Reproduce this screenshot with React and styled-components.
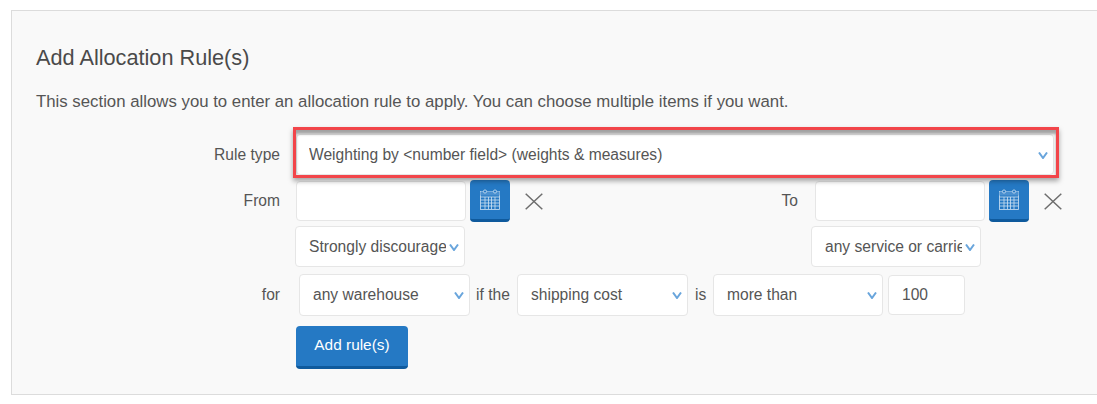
import React from "react";
import styled, { createGlobalStyle } from "styled-components";

const Global = createGlobalStyle`
  html, body { margin: 0; padding: 0; background: #fff; }
  body { font-family: "Liberation Sans", Arial, sans-serif; color: #555; overflow: hidden; }
`;

const Panel = styled.section`
  box-sizing: border-box;
  margin: 10px 0 0 11px;
  width: 1086px;
  height: 385px;
  background: #f9f9f9;
  border: 1px solid #dcdcdc;
  border-right: 0;
`;
const Header = styled.header`
  padding: 35px 0 0 24px;
`;
const Title = styled.h2`
  margin: 0 0 22px;
  font-size: 21.7px;
  line-height: 24px;
  font-weight: 400;
  color: #4a4a4a;
`;
const Intro = styled.p`
  margin: 0 0 22px;
  font-size: 16.8px;
  line-height: 20px;
  color: #555;
`;
const Form = styled.div`
  display: flex;
  flex-direction: column;
`;
const Row = styled.div`
  display: flex;
  align-items: center;
  margin-top: ${(p) => p.$top || 0}px;
`;
const Label = styled.label`
  box-sizing: border-box;
  flex: none;
  width: ${(p) => p.$width || 268}px;
  margin-right: ${(p) => p.$gap ?? 16}px;
  text-align: right;
  font-size: 15.6px;
  color: #555;
`;
const Word = styled.span`
  flex: none;
  width: ${(p) => p.$width}px;
  margin: 0 ${(p) => p.$right}px 0 ${(p) => p.$left}px;
  font-size: 15.6px;
  color: #555;
`;
const Highlight = styled.div`
  position: relative;
  flex: none;
  width: 758px;
  &::after {
    content: "";
    position: absolute;
    inset: -7px -5px -3px -3px;
    border: 3px solid #f2454a;
    box-shadow: 0 3px 5px rgba(0, 0, 0, 0.35), inset 0 4px 3px rgba(0, 0, 0, 0.35);
    pointer-events: none;
  }
`;
const SelectBox = styled.div`
  box-sizing: border-box;
  flex: none;
  display: flex;
  align-items: center;
  width: ${(p) => p.$width}px;
  height: ${(p) => p.$height || 41}px;
  margin-left: ${(p) => p.$left || 0}px;
  padding: 0 5px 0 ${(p) => p.$pad || 13}px;
  background: #fff;
  border: 1px solid #e6e6e6;
  border-radius: 4px;
  font-size: 15.6px;
  color: #555;
`;
const SelectText = styled.span`
  flex: 1;
  min-width: 0;
  white-space: nowrap;
  overflow: hidden;
`;
const Chevron = styled.svg`
  flex: none;
  width: 10px;
  height: 7px;
  margin: 1px 0 0 3px;
`;
const DateGroup = styled.div`
  flex: none;
  display: flex;
  align-items: center;
  width: ${(p) => p.$width || "auto"};
`;
const TextBox = styled.div`
  box-sizing: border-box;
  flex: none;
  width: ${(p) => p.$width}px;
  height: ${(p) => p.$height}px;
  margin-left: ${(p) => p.$left || 0}px;
  padding: 0 13px;
  display: flex;
  align-items: center;
  background: #fff;
  border: 1px solid #e6e6e6;
  border-radius: 4px;
  font-size: 15.6px;
  color: #555;
`;
const CalendarButton = styled.button`
  flex: none;
  display: flex;
  align-items: center;
  justify-content: center;
  width: 40px;
  height: 42px;
  margin-left: 4px;
  padding: 0;
  background: #2579c4;
  border: 0;
  border-bottom: 3px solid #0f5a9d;
  border-radius: 4px;
`;
const Clear = styled.svg`
  flex: none;
  width: 18px;
  height: 17px;
  margin-left: 15px;
`;
const AddButton = styled.button`
  box-sizing: border-box;
  width: 112px;
  height: 43px;
  margin-left: 284px;
  padding: 0 0 2px;
  background: #2579c4;
  border: 0;
  border-bottom: 3px solid #0f5a9d;
  border-radius: 4px;
  color: #fff;
  font-family: inherit;
  font-size: 15.4px;
`;

const Down = () => (
  <Chevron viewBox="0 0 10 7" aria-hidden="true">
    <path d="M1 0.5 L5 6 L9 0.5" fill="none" stroke="#69a5dc" strokeWidth="2" />
  </Chevron>
);
const Calendar = () => (
  <svg width="20" height="21" viewBox="0 0 20 21" aria-hidden="true" fill="none" stroke="#cfe2f3" strokeWidth="0.8">
    <rect x="0.5" y="2.5" width="19" height="18" />
    <rect x="0.5" y="2.5" width="19" height="4" fill="#4a90d0" stroke="none" />
    <path d="M0.5 8 H19.5 M0.5 11 H19.5 M0.5 14 H19.5 M0.5 17 H19.5 M5 8 V20 M8.5 8 V20 M11.5 8 V20 M15 8 V20" />
    <circle cx="5" cy="2.5" r="1.6" fill="#2579c4" />
    <circle cx="15" cy="2.5" r="1.6" fill="#2579c4" />
  </svg>
);
const Cross = () => (
  <Clear viewBox="0 0 18 17" aria-hidden="true">
    <path d="M0.7 0.7 L17.3 16.3 M17.3 0.7 L0.7 16.3" stroke="#6e6e6e" strokeWidth="1.5" />
  </Clear>
);
const Select = ({ width, left, height, pad, children }) => (
  <SelectBox $width={width} $left={left} $height={height} $pad={pad}>
    <SelectText>{children}</SelectText>
    <Down />
  </SelectBox>
);
const DateField = ({ width }) => (
  <DateGroup $width={width}>
    <TextBox $width={170} $height={40} />
    <CalendarButton aria-label="Pick a date"><Calendar /></CalendarButton>
    <Cross />
  </DateGroup>
);

export default function App() {
  return (
    <>
      <Global />
      <Panel>
        <Header>
          <Title>Add Allocation Rule(s)</Title>
          <Intro>This section allows you to enter an allocation rule to apply. You can choose multiple items if you want.</Intro>
        </Header>
        <Form>
          <Row>
            <Label>Rule type</Label>
            <Highlight>
              <Select width={758} pad={12}>Weighting by &lt;number field&gt; (weights &amp; measures)</Select>
            </Highlight>
          </Row>
          <Row $top={5}>
            <Label>From</Label>
            <DateField width="250px" />
            <Label $width={252} $gap={17}>To</Label>
            <DateField />
          </Row>
          <Row $top={4}>
            <Select width={170} left={283}>Strongly discourage</Select>
            <Select width={170} left={346}>any service or carrier</Select>
          </Row>
          <Row $top={7}>
            <Label $gap={19}>for</Label>
            <Select width={171} height={42}>any warehouse</Select>
            <Word $width={35} $left={6} $right={6}>if the</Word>
            <Select width={171} height={42}>shipping cost</Select>
            <Word $width={11} $left={7} $right={7}>is</Word>
            <Select width={170} height={42}>more than</Select>
            <TextBox $width={77} $height={40} $left={5}>100</TextBox>
          </Row>
          <Row $top={10}>
            <AddButton>Add rule(s)</AddButton>
          </Row>
        </Form>
      </Panel>
    </>
  );
}
